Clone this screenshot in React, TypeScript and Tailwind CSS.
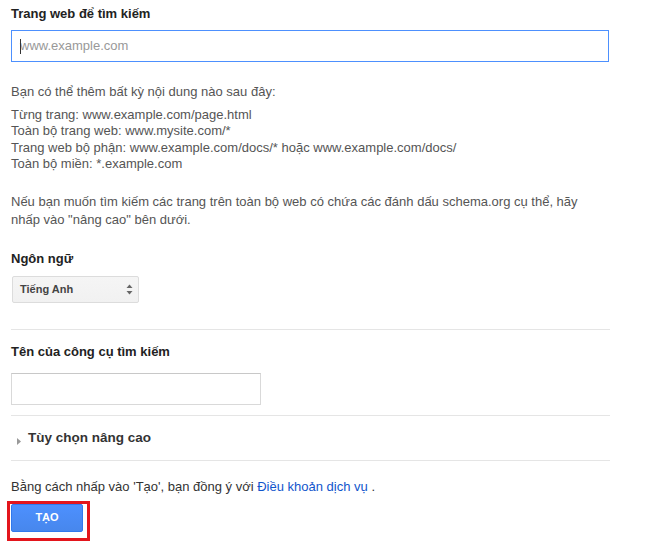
import React from "react";

export default function App() {
  return (
    <div
      className="w-[656px] h-[553px] bg-white overflow-hidden"
      style={{ fontFamily: '"Liberation Sans", Arial, sans-serif' }}
    >
      <div className="pl-[11px] w-[610px] flex flex-col">
        <div className="pt-[6px] text-[13px] leading-[16px] font-bold text-[#222]">
          Trang web để tìm kiếm
        </div>
        <div className="relative mt-[8px] h-[32px] w-[598px] border border-[#4d90fe] flex items-center pl-[8px] text-[13px] text-[#999]">
          www.example.com
          <span className="absolute left-[8px] top-[8px] w-px h-[15px] bg-[#333]" />
        </div>

        <div className="mt-[22px] text-[13px] leading-[16px] text-[#555]">
          Bạn có thể thêm bất kỳ nội dung nào sau đây:
        </div>
        <div className="mt-[7px] text-[13px] leading-[16.4px] text-[#555] flex flex-col">
          <div>Từng trang: www.example.com/page.html</div>
          <div>Toàn bộ trang web: www.mysite.com/*</div>
          <div>Trang web bộ phận: www.example.com/docs/* hoặc www.example.com/docs/</div>
          <div>Toàn bộ miền: *.example.com</div>
        </div>

        <div className="mt-[20px] text-[13px] leading-[18px] text-[#555] w-[590px]">
          Nếu bạn muốn tìm kiếm các trang trên toàn bộ web có chứa các đánh dấu schema.org cụ thể, hãy nhấp vào "nâng cao" bên dưới.
        </div>

        <div className="mt-[22px] text-[13px] leading-[16px] font-bold text-[#222]">
          Ngôn ngữ
        </div>
        <div className="mt-[9px] ml-[1px] h-[27px] w-[127px] rounded-[2px] border border-[#dcdcdc] bg-gradient-to-b from-[#f5f5f5] to-[#f1f1f1] flex items-center justify-between pl-[7px] pr-[5px]">
          <span className="text-[11px] font-bold text-[#444]">Tiếng Anh</span>
          <svg width="7" height="11" viewBox="0 0 7 11">
            <path d="M3.5 0.5 L6.5 4 L0.5 4 Z" fill="#666" />
            <path d="M0.5 7 L6.5 7 L3.5 10.5 Z" fill="#666" />
          </svg>
        </div>

        <div className="mt-[26px] h-px bg-[#e5e5e5]" />

        <div className="mt-[14px] text-[13px] leading-[16px] font-bold text-[#222]">
          Tên của công cụ tìm kiếm
        </div>
        <div className="mt-[13px] h-[32px] w-[250px] border border-[#d9d9d9] border-t-[#c8c8c8] bg-white" />

        <div className="mt-[10px] h-px bg-[#e5e5e5]" />

        <div className="mt-[14px] flex items-center h-[16px]">
          <svg width="4" height="7" viewBox="0 0 4 7" className="ml-[6px] mt-[7px]">
            <path d="M0 0 L4 3.5 L0 7 Z" fill="#999" />
          </svg>
          <span className="ml-[7px] text-[13.5px] leading-[16px] font-bold text-[#333]">
            Tùy chọn nâng cao
          </span>
        </div>

        <div className="mt-[14px] h-px bg-[#e5e5e5]" />

        <div className="mt-[18px] text-[13px] leading-[16px] text-[#333]">
          Bằng cách nhấp vào 'Tạo', bạn đồng ý với{" "}
          <span className="text-[#1155cc]">Điều khoản dịch vụ</span> .
        </div>

        <div className="mt-[6px] -ml-[4px] w-[83px] border-[3px] border-[#e3151c] pl-[1px] pt-0 pb-[6px] pr-[4px]">
          <div className="h-[28px] w-[72px] rounded-[2px] border border-[#3079ed] bg-gradient-to-b from-[#4d90fe] to-[#4787ed] flex items-center justify-center text-[11px] font-bold text-white">
            TẠO
          </div>
        </div>
      </div>
    </div>
  );
}
